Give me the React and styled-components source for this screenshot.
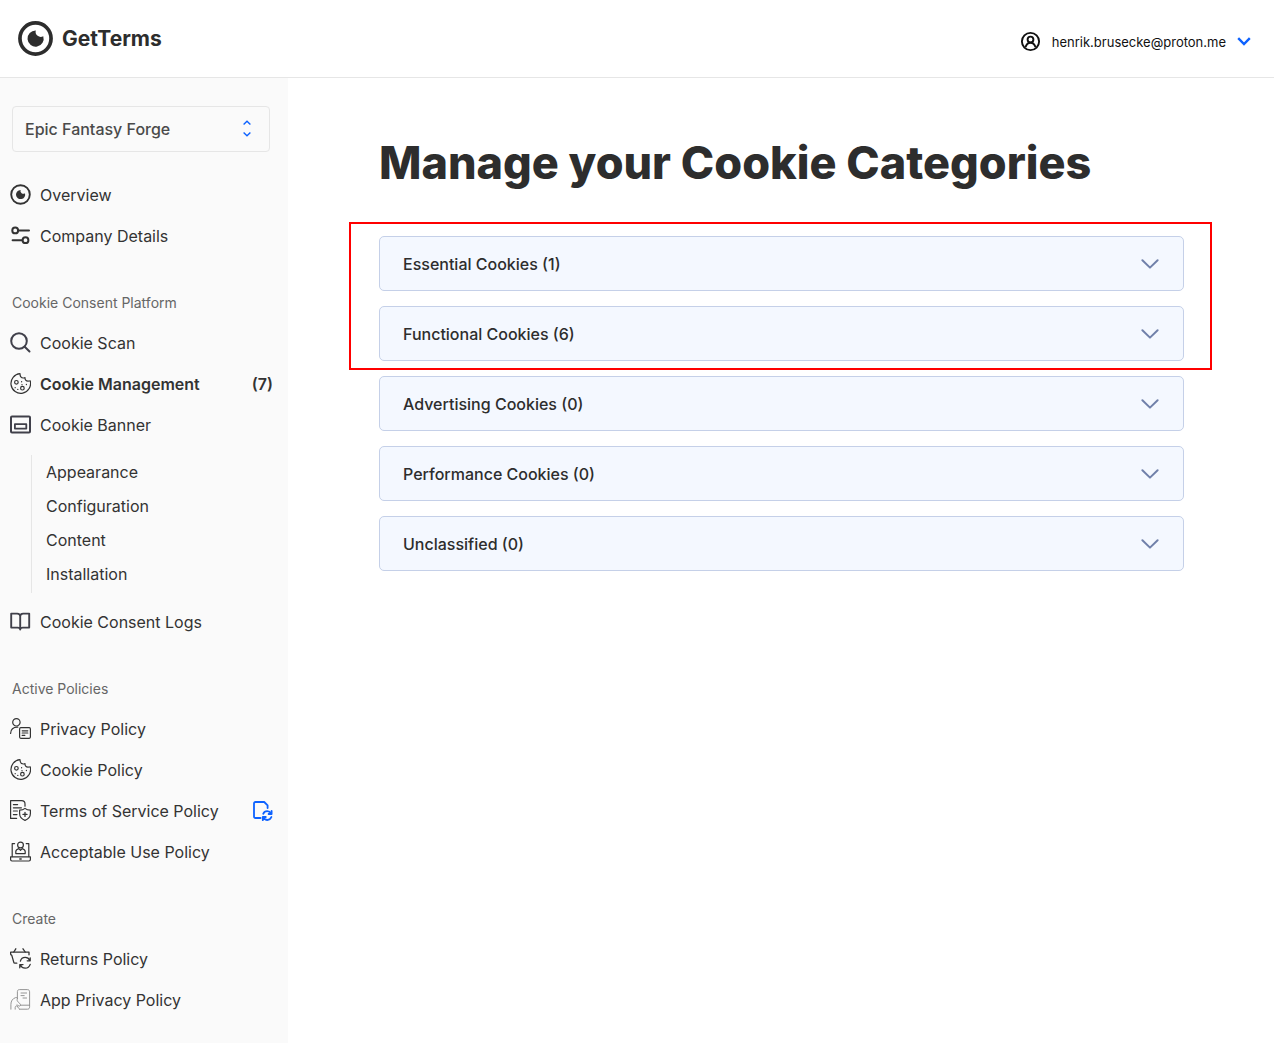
import React, {useState} from 'react'
import styled, {createGlobalStyle} from 'styled-components'


const GlobalStyle = createGlobalStyle`
    *, *::before, *::after {
        box-sizing: border-box;
    }

    body {
        margin: 0;
        background: #fff;
        color: #2d2d2d;
        font-family: Inter, "Liberation Sans", sans-serif;
        font-size: 16px;
    }

    button, select {
        font: inherit;
        color: inherit;
    }
`

// every sidebar icon is drawn on the same 21px grid
function Icon({children, color = '#333', weight = 1, size = 21}) {
    return (
        <svg width={size} height={size} viewBox="0 0 21 21" fill="none" stroke={color} strokeWidth={weight}
            strokeLinecap="round" strokeLinejoin="round" aria-hidden="true">
            {children}
        </svg>
    )
}

const LogoMark = () => (
    <svg width="35" height="35" viewBox="0 0 36 36" aria-hidden="true">
        <circle cx="18" cy="18" r="16" fill="none" stroke="#2d2d2d" strokeWidth="3.8"/>
        <path d="M18.3 9.8A5.2 5.2 0 0 0 26 15.6A8.3 8.3 0 1 1 18.3 9.8Z" fill="#2d2d2d"/>
    </svg>
)

const EyeIcon = () => (
    <Icon weight={1.9}>
        <circle cx="10.5" cy="10.5" r="9.3"/>
        <path d="M10.6 5.9A2.9 2.9 0 0 0 15 9.2A4.6 4.6 0 1 1 10.6 5.9Z" fill="#333" stroke="none"/>
    </Icon>
)

const SlidersIcon = () => (
    <Icon weight={2}>
        <circle cx="5.2" cy="5.4" r="2.9"/>
        <path d="M8.4 5.4H19M2.6 15.2h9.6"/>
        <circle cx="15.5" cy="15.2" r="2.9"/>
    </Icon>
)

const SearchIcon = () => (
    <Icon weight={2} color="#40404a">
        <circle cx="9" cy="9" r="7.8"/>
        <path d="M14.7 14.7l4.8 4.8"/>
    </Icon>
)

const CookieIcon = () => (
    <Icon weight={1.2}>
        <path d="M10 .7C10 3 11.2 4.9 13.4 5C14.2 5.1 14.6 4.6 15 4.6C14.8 6.6 16 8.1 18 8.1C18.8 8.1 19.6 8 20.2 7.8A9.8 9.8 0 1 1 10 .7Z"/>
        <circle cx="6.4" cy="9.3" r="1.8"/>
        <circle cx="12.4" cy="15.2" r="1.8"/>
        <path d="M11.6 8.7v.1M16.4 11.4v.1M5.2 14.6v.1M7.8 16.3v.1M12 11.6v.1" strokeWidth="1.3"/>
    </Icon>
)

const BannerIcon = () => (
    <Icon weight={2} color="#40404a">
        <rect x="1" y="2.4" width="19" height="16" rx="1"/>
        <rect x="4.9" y="10.2" width="11.4" height="4.4" strokeWidth="1.8"/>
    </Icon>
)

const BookIcon = () => (
    <Icon weight={1.9} color="#40404a">
        <path d="M10.2 5.2C10.2 3.4 9 2.6 7.2 2.6H1.2V16.6H7.6C9 16.6 10.2 17.2 10.2 18.6C10.2 17.2 11.4 16.6 12.8 16.6H19.2V2.6H13.2C11.4 2.6 10.2 3.4 10.2 5.2V18.6"/>
    </Icon>
)

const PrivacyIcon = () => (
    <Icon weight={1.2}>
        <circle cx="6.4" cy="4.3" r="3.7"/>
        <path d="M.6 15.4C.6 11.6 3.2 9 7.8 9.2"/>
        <rect x="9.6" y="9.7" width="10.8" height="10.6" rx="1.2"/>
        <path d="M12.2 12.8h5.6M12.2 15h5.6M12.2 17.4h2.6"/>
    </Icon>
)

const TermsIcon = () => (
    <Icon weight={1.2}>
        <path d="M6.6 18.4H.6V.6H11.6C13.6 .6 15 2 15 4V6.2"/>
        <path d="M3.4 4.6H7.6M3.4 7.8H11.4M3.4 11H7.4M3.4 14.6H7"/>
        <path d="M15 8.4C13.4 9.8 11.6 10.2 9.6 10.2V13.6C9.6 17 11.8 19.2 15 20.4C18.2 19.2 20.4 17 20.4 13.6V10.2C18.4 10.2 16.6 9.8 15 8.4Z"/>
        <path d="M15 12.4v4M13 14.4h4" strokeWidth="1.3"/>
    </Icon>
)

const LaptopIcon = () => (
    <Icon weight={1.2}>
        <path d="M4.6 2.6H2.2V15.6M16.2 2.6H18.8V15.6"/>
        <circle cx="10.5" cy="4" r="2.9"/>
        <path d="M5.8 12.6V10.6C5.8 9.2 7.2 8.2 8.8 7.6L10.5 9.4L12.2 7.6C13.8 8.2 15.2 9.2 15.2 10.6V12.6Z"/>
        <path d="M.6 15.8H20.4V18.6C20.4 19.4 19.9 20 19 20H2C1.1 20 .6 19.4 .6 18.6Z"/>
        <path d="M9.8 18h1.4" strokeWidth="1.4"/>
    </Icon>
)

const BasketIcon = () => (
    <Icon weight={1.3}>
        <path d="M5.8 .8L3.8 4M13 .8L15.2 4"/>
        <path d="M6.8 15.2H4.8C4.2 15.2 3.9 14.9 3.8 14.4L1.8 7.4C.9 7 .6 6.6 .6 5.8V4.2H19V6.8"/>
        <path d="M10.4 13.2C11 10.8 13 9.4 15.2 9.4C17.4 9.4 19 10.6 19.8 12.4M20.2 9.8V12.8H17.2"/>
        <path d="M20.2 16.4C19.4 18.8 17.6 20.2 15.2 20.2C13 20.2 11.2 18.8 10.4 17M9.8 19.8V16.6H13"/>
    </Icon>
)

const PhoneIcon = () => (
    <Icon weight={0.9} color="#8a8a8a">
        <path d="M7.4 9.6V2.6C7.4 1.3 8.2 .6 9.4 .6H17.4C18.8 .6 19.6 1.4 19.6 2.8V17.8C19.6 19.4 18.8 20.2 17.4 20.2H9.6"/>
        <path d="M11 4h5.6M11 6.6h3.2M13 9h3.6M10.6 16.2H19.4"/>
        <path d="M.9 20.2V15.4C.9 12 2.6 9.6 5.6 8.6C7 8.2 7.6 9 7.2 10.2C6.8 11.8 7.6 12.6 8.8 13.6C10.2 14.8 10.8 15.6 10.4 16.6C9.8 17.6 8.4 17 7 15.8M5.2 20.2V18.4C5.2 17.4 6 16.8 7 16.8C7.8 18.4 8.6 19.4 9.6 20.2"/>
    </Icon>
)

const UpdateIcon = () => (
    <Icon weight={1.8} color="#0d62ff">
        <path d="M8.6 18H3.4C2.6 18 2 17.4 2 16.6V3.4C2 2.6 2.6 2 3.4 2H12.2L15.6 5.4V8"/>
        <path d="M11.2 13.8C12 12 13.4 11.2 15.2 11.2C16.8 11.2 18.2 12 19 13.4M19.6 11V14H16.6" strokeWidth="1.8"/>
        <path d="M19.4 17C18.6 18.8 17.2 20 15.4 20C13.6 20 12.2 19 11.4 17.4M10.8 20.2V17H13.8" strokeWidth="1.8"/>
    </Icon>
)

const AccountIcon = () => (
    <Icon weight={1.9} color="#111">
        <circle cx="10.5" cy="10.5" r="8.6"/>
        <circle cx="10.5" cy="8.5" r="2.9"/>
        <path d="M5.8 15.4C6.6 13.2 8.2 11.8 10.5 11.8C12.8 11.8 14.4 13.2 15.2 15.4"/>
    </Icon>
)


const navGroups = [
    {
        items: [
            {text: 'Overview', icon: EyeIcon},
            {text: 'Company Details', icon: SlidersIcon},
        ],
    },
    {
        title: 'Cookie Consent Platform',
        items: [
            {text: 'Cookie Scan', icon: SearchIcon},
            {text: 'Cookie Management', icon: CookieIcon, active: true, count: 7},
            {text: 'Cookie Banner', icon: BannerIcon, children: ['Appearance', 'Configuration', 'Content', 'Installation']},
            {text: 'Cookie Consent Logs', icon: BookIcon},
        ],
    },
    {
        title: 'Active Policies',
        items: [
            {text: 'Privacy Policy', icon: PrivacyIcon},
            {text: 'Cookie Policy', icon: CookieIcon},
            {text: 'Terms of Service Policy', icon: TermsIcon, update: true},
            {text: 'Acceptable Use Policy', icon: LaptopIcon},
        ],
    },
    {
        title: 'Create',
        items: [
            {text: 'Returns Policy', icon: BasketIcon},
            {text: 'App Privacy Policy', icon: PhoneIcon},
        ],
    },
]

const highlighted = [
    {name: 'Essential Cookies', count: 1},
    {name: 'Functional Cookies', count: 6},
]

const others = [
    {name: 'Advertising Cookies', count: 0},
    {name: 'Performance Cookies', count: 0},
    {name: 'Unclassified', count: 0},
]


function NavItem({item}) {
    const ItemIcon = item.icon

    return (
        <li>
            <NavLink href="#" $active={item.active}>
                <ItemIcon/>
                <NavText>{item.text}</NavText>
                {item.count && <span>({item.count})</span>}
                {item.update && <UpdateIcon/>}
            </NavLink>
            {item.children &&
            <SubList>
                {item.children.map(child => (
                    <li key={child}><SubLink href="#">{child}</SubLink></li>
                ))}
            </SubList>}
        </li>
    )
}

function Category({name, count}) {
    const [open, setOpen] = useState(false);

    return (
        <CategoryButton type="button" aria-expanded={open} onClick={() => setOpen(!open)}>
            {name} ({count})
            <svg width="18" height="10" viewBox="0 0 18 10" fill="none" stroke="#7080aa" strokeWidth="2"
                strokeLinecap="round" strokeLinejoin="round" aria-hidden="true">
                <path d="M1.4 1.2L9 8.6L16.6 1.2"/>
            </svg>
        </CategoryButton>
    )
}

function App() {
    return (
        <Page>
            <GlobalStyle/>
            <Header>
                <Logo href="#">
                    <LogoMark/>
                    GetTerms
                </Logo>
                <AccountButton type="button">
                    <AccountIcon/>
                    henrik.brusecke@proton.me
                    <svg width="14" height="9" viewBox="0 0 14 9" fill="none" stroke="#0d62ff" strokeWidth="2.4" aria-hidden="true">
                        <path d="M1.2 1.2L7 7L12.8 1.2"/>
                    </svg>
                </AccountButton>
            </Header>
            <Body>
                <Sidebar>
                    <SiteField>
                        <SiteSelect aria-label="Website" defaultValue="Epic Fantasy Forge">
                            <option>Epic Fantasy Forge</option>
                        </SiteSelect>
                        <SelectArrows width="8" height="17" viewBox="0 0 8 17" fill="none" stroke="#0d62ff"
                            strokeWidth="1.4" aria-hidden="true">
                            <path d="M.6 4.4L4 1.2L7.4 4.4M.6 12.6L4 15.8L7.4 12.6"/>
                        </SelectArrows>
                    </SiteField>
                    <nav>
                        {navGroups.map((group, i) => (
                            <NavGroup key={i}>
                                {group.title && <GroupTitle>{group.title}</GroupTitle>}
                                <NavList>
                                    {group.items.map(item => <NavItem key={item.text} item={item}/>)}
                                </NavList>
                            </NavGroup>
                        ))}
                    </nav>
                </Sidebar>
                <Main>
                    <Title>Manage your Cookie Categories</Title>
                    <Categories>
                        <Highlight>
                            {highlighted.map(c => <Category key={c.name} {...c}/>)}
                        </Highlight>
                        {others.map(c => <Category key={c.name} {...c}/>)}
                    </Categories>
                </Main>
            </Body>
        </Page>
    )
}

export default App

const Page = styled.div`
    min-height: 100vh;
    display: flex;
    flex-direction: column;
`

const Header = styled.header`
    height: 78px;
    padding: 0 23px 0 18px;
    border-bottom: 1px solid #e6e6e6;
    display: flex;
    justify-content: space-between;
    align-items: center;
`

const Logo = styled.a`
    display: flex;
    align-items: center;
    gap: 9px;
    color: #2d2d2d;
    font-size: 21px;
    font-weight: 700;
    text-decoration: none;
`

const AccountButton = styled.button`
    display: flex;
    align-items: center;
    gap: 11px;
    padding: 6px 0 0;
    border: 0;
    background: none;
    color: #111;
    font-size: 13px;
    cursor: pointer;
`

const Body = styled.div`
    flex: 1;
    display: flex;
`

const Sidebar = styled.aside`
    width: 288px;
    flex-shrink: 0;
    padding-top: 28px;
    background: #fafafa;
`

const SiteField = styled.div`
    position: relative;
    margin: 0 18px 22px 12px;
`

const SiteSelect = styled.select`
    display: block;
    width: 100%;
    height: 46px;
    padding: 0 12px;
    border: 1px solid #e6e6e6;
    border-radius: 4px;
    background: #fafafa;
    color: #4a4a4a;
    font-weight: 500;
    appearance: none;
`

//flechas encima del select
const SelectArrows = styled.svg`
    position: absolute;
    top: 14px;
    right: 19px;
    pointer-events: none;
`

const NavGroup = styled.section`
    margin-bottom: 37px;

    &:last-child {
        margin-bottom: 0;
    }
`

const GroupTitle = styled.h2`
    margin: 0 0 9px;
    padding-left: 12px;
    color: #666;
    font-size: 14px;
    font-weight: 400;
    line-height: 20px;
`

const NavList = styled.ul`
    margin: 0;
    padding: 0;
    list-style: none;
`

const NavLink = styled.a`
    height: 41px;
    padding: 0 15px 0 10px;
    display: flex;
    align-items: center;
    gap: 9px;
    color: #333;
    font-weight: ${props => props.$active ? 600 : 400};
    text-decoration: none;
`

const NavText = styled.span`
    flex: 1;
`

const SubList = styled(NavList)`
    margin: 10px 0 8px 31px;
    padding-bottom: 2px;
    border-left: 1px solid #e6e6e6;
`

const SubLink = styled.a`
    display: block;
    padding-left: 14px;
    color: #333;
    line-height: 34px;
    text-decoration: none;
`

const Main = styled.main`
    flex: 1;
    padding: 56px 90px 40px 91px;
`

const Title = styled.h1`
    margin: 0 0 44px;
    color: #2d2d2d;
    font-size: 45px;
    font-weight: 800;
    line-height: 58px;
`

const Categories = styled.div`
    display: flex;
    flex-direction: column;
    gap: 15px;
`

const Highlight = styled(Categories)`
    position: relative;

    &::after {
        content: '';
        position: absolute;
        top: -14px;
        right: -28px;
        bottom: -9px;
        left: -30px;
        border: 2px solid #ff0000;
        pointer-events: none;
    }
`

const CategoryButton = styled.button`
    height: 55px;
    padding: 0 24px 0 23px;
    border: 1px solid #c5d0e8;
    border-radius: 5px;
    background: #f4f8ff;
    color: #2d2d2d;
    font-weight: 500;
    text-align: left;
    display: flex;
    justify-content: space-between;
    align-items: center;
    cursor: pointer;
`
